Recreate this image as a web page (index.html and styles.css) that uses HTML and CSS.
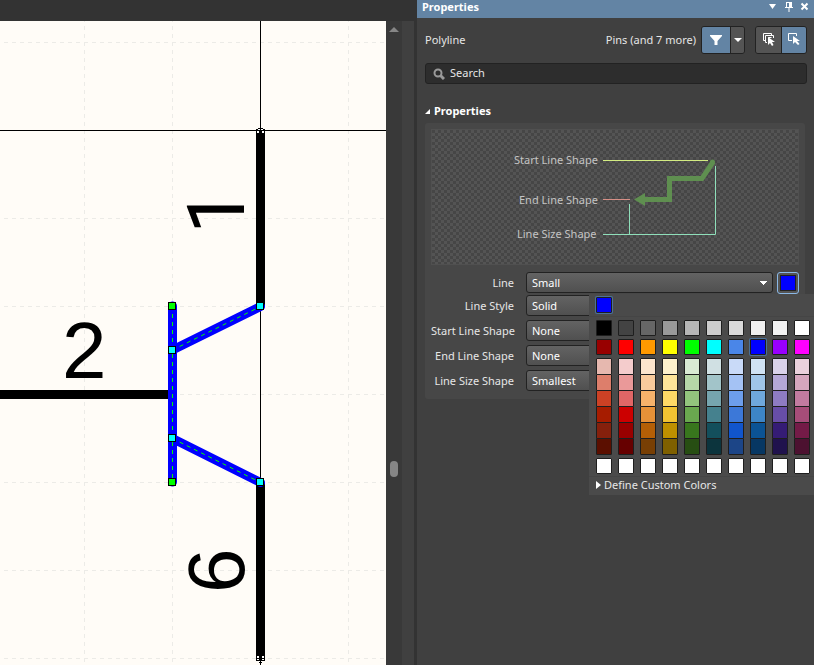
FILE: index.html
```html
<!DOCTYPE html>
<html lang="en">
  <head>
    <meta charset="UTF-8" />
    <meta name="viewport" content="width=device-width, initial-scale=1.0" />
    <title>Schematic Library | Properties</title>
    <link rel="stylesheet" href="styles.css">
  </head>
  <body>
    <!-- Schematic editor -->
    <main class="editor">
      <div class="editor-bar"></div>
      <div class="editor-body">
        <svg class="sheet" role="img" aria-label="Symbol drawing">
          <defs>
            <pattern id="grid" x="84" y="21" width="88" height="88" patternUnits="userSpaceOnUse">
              <path d="M0.5 0V88M0 0.5H88" stroke="#ecebe7" stroke-dasharray="4 4" fill="none" />
            </pattern>
          </defs>
          <rect width="100%" height="100%" fill="url(#grid)" />

          <!-- Cursor cross -->
          <path d="M260.5 0V1000M0 109.5H386" stroke="#000" fill="none" />

          <!-- Pins -->
          <path d="M260.5 108V285M260.5 461V640M0 373.5H168" stroke="#000" stroke-width="9" fill="none" />
          <g fill="#fff">
            <path d="M257 110h2v2h-2zM262 110h2v2h-2zM258 108h2v1h-2zM261 108h2v1h-2z" />
            <path d="M257 635h2v2h-2zM262 635h2v2h-2zM257 638h2v1h-2zM262 638h2v1h-2z" />
          </g>
          <path d="M258 107.5h5M259 641.5h3" stroke="#000" />
          <text class="pin-number" x="62" y="357">2</text>
          <text class="pin-number pin-one" transform="translate(244 213) rotate(-90)">1</text>
          <text class="pin-number" transform="translate(244 572) rotate(-90)">6</text>

          <!-- Selected polylines -->
          <path d="M172.5 285V461M172.5 329L260.5 285.5M172.5 417.5L260.5 461.5" stroke="#00f" stroke-width="9" stroke-linecap="round" fill="none" />
          <path d="M172.5 285V461M172.5 329L260.5 285.5M172.5 417.5L260.5 461.5" stroke="#0f0" stroke-dasharray="4 4" fill="none" />
          <g stroke="#000" fill="#0f0">
            <rect x="168.5" y="281.5" width="7" height="7" />
            <rect x="168.5" y="457.5" width="7" height="7" />
          </g>
          <g stroke="#000" fill="#0ff">
            <rect x="168.5" y="325.5" width="7" height="7" />
            <rect x="168.5" y="413.5" width="7" height="7" />
            <rect x="256.5" y="281.5" width="7" height="7" />
            <rect x="256.5" y="457.5" width="7" height="7" />
          </g>
        </svg>
        <div class="scrollbar">
          <span class="scroll-up"></span>
          <span class="scroll-thumb"></span>
        </div>
        <div class="gutter"></div>
      </div>
    </main>

    <!-- Properties panel -->
    <aside class="panel">
      <header class="panel-header">
        <h1>Properties</h1>
        <button type="button" aria-label="Panel menu">
          <svg width="9" height="9"><path d="M1 2h7L4.5 7z" fill="#fff" /></svg>
        </button>
        <button type="button" aria-label="Pin panel">
          <svg width="9" height="10"><path d="M2 0h6v5h1v1H5.5v4h-1V6H1V5h1zM3 1v4h2V1z" fill="#fff" fill-rule="evenodd" /></svg>
        </button>
        <button type="button" aria-label="Close panel">
          <svg width="9" height="9"><path d="M1.5 1.5l6 6M7.5 1.5l-6 6" stroke="#fff" stroke-width="2" /></svg>
        </button>
      </header>

      <div class="filter-row">
        <span class="object-type">Polyline</span>
        <span>Pins (and 7 more)</span>
        <div class="btn-group">
          <button type="button" class="btn-filter active" aria-label="Filter">
            <svg width="12" height="12"><path d="M0 1h12v1L7.5 7v4h-3V7L0 2z" fill="#fff" /></svg>
          </button>
          <button type="button" class="btn-drop" aria-label="Filter options">
            <svg width="8" height="5"><path d="M0 0h8L4 4z" fill="#fff" /></svg>
          </button>
        </div>
        <div class="btn-group">
          <button type="button" class="btn-select" aria-label="Select multiple">
            <svg width="14" height="16" fill="none" stroke="#fff">
              <path d="M3 8.5H1.5v-7h8V3M5 10.5H3.5v-7h8V6M6.5 11V5.5h3" />
              <path d="M6 5v8l2-2 2 3 1.5-1-1.5-3h3z" fill="#fff" stroke="none" />
            </svg>
          </button>
          <button type="button" class="btn-select active" aria-label="Select single">
            <svg width="14" height="16" fill="none" stroke="#fff">
              <path d="M5 8.500H1.500v-7h8V4" />
              <path d="M6 4v8l2-2 3 3 1.500-1-2.500-3h3z" fill="#fff" stroke="none" />
            </svg>
          </button>
        </div>
      </div>

      <label class="search">
        <svg width="12" height="12" fill="none" stroke="#999" stroke-width="2">
          <circle cx="5" cy="5" r="3.5" /><path d="M7.5 7.5L11 11" stroke-width="3" />
        </svg>
        <input type="text" placeholder="Search" aria-label="Search" />
      </label>

      <h2 class="section-title">
        <svg width="5" height="5"><path d="M5 0v5H0z" fill="#fff" /></svg>
        Properties
      </h2>

      <div class="section">
        <div class="preview">
          <svg width="368" height="136" fill="none">
            <g class="preview-labels">
              <text x="83" y="35">Start Line Shape</text>
              <text x="88" y="75">End Line Shape</text>
              <text x="86" y="109">Line Size Shape</text>
            </g>
            <path d="M172 31.5H277" stroke="#d3ec82" />
            <path d="M172 70.5H199" stroke="#d68f86" />
            <path d="M172 105.5H284.5V37M198.5 75V105" stroke="#8fdfba" />
            <path d="M282 33L271 49.5H238.5V70.5H213" stroke="#5f8f50" stroke-width="5" />
            <circle cx="281.5" cy="33" r="2.5" fill="#5f8f50" />
            <path d="M203 70.5L214 64v13z" fill="#5f8f50" />
          </svg>
        </div>

        <div class="fields">
          <div class="field field-line">
            <label for="line">Line</label>
            <select id="line"><option>Small</option></select>
            <button type="button" class="color-btn" aria-label="Line colour"><span></span></button>

            <!-- Colour picker -->
            <div class="picker">
              <div class="picker-current">
                <button type="button" class="swatch selected" style="background-color: #0000ff" aria-label="#0000ff"></button>
              </div>
              <div class="picker-colors" id="picker-colors"></div>
              <button type="button" class="picker-custom">
                <svg width="5" height="8"><path d="M0 0l5 4-5 4z" fill="#fff" /></svg>
                Define Custom Colors
              </button>
            </div>
          </div>
          <div class="field">
            <label for="line-style">Line Style</label>
            <select id="line-style"><option>Solid</option></select>
          </div>
          <div class="field">
            <label for="start-shape">Start Line Shape</label>
            <select id="start-shape"><option>None</option></select>
          </div>
          <div class="field">
            <label for="end-shape">End Line Shape</label>
            <select id="end-shape"><option>None</option></select>
          </div>
          <div class="field">
            <label for="size-shape">Line Size Shape</label>
            <select id="size-shape"><option>Smallest</option></select>
          </div>
        </div>
      </div>
    </aside>

    <script src="script.js"></script>
  </body>
</html>
```
FILE: styles.css
```css
* {
  box-sizing: border-box;
}

body {
  display: flex;
  height: 100vh;
  margin: 0;
  overflow: hidden;
  background-color: #404040;
  color: #e6e6e6;
  font-family: "Noto Sans", sans-serif;
  font-size: 11px;
  line-height: 16px;
}

button,
input,
select {
  margin: 0;
  padding: 0;
  border: 0;
  color: inherit;
  font: inherit;
}

/* Editor */
.editor {
  display: flex;
  flex: 1;
  flex-direction: column;
  min-width: 0;
  border-right: 3px solid #333;
}

.editor-bar {
  flex: none;
  height: 21px;
  background-color: #333;
}

.editor-body {
  display: flex;
  flex: 1;
  min-height: 0;
}

.sheet {
  flex: 1;
  min-width: 0;
  height: 100%;
  background-color: #fffcf7;
}

.pin-number {
  font-family: "Liberation Sans", Arial, sans-serif;
  font-size: 80px;
}

.pin-one {
  font-family: Roboto, sans-serif;
}

.scrollbar {
  display: flex;
  flex-direction: column;
  align-items: center;
  width: 16px;
  padding-top: 6px;
  background-color: #393939;
}

.scroll-up {
  border: 5px solid transparent;
  border-top: 0;
  border-bottom-color: #868686;
}

.scroll-thumb {
  width: 8px;
  height: 16px;
  margin-top: 429px;
  border-radius: 4px;
  background-color: #868686;
}

.gutter {
  width: 12px;
  background-color: #404040;
}

/* Panel */
.panel {
  flex: none;
  width: 397px;
}

.panel-header {
  display: flex;
  align-items: flex-start;
  gap: 7px;
  height: 18px;
  padding: 0 5px;
  background-color: #6384a4;
  color: #fff;
}

.panel-header h1 {
  flex: 1;
  margin: 0;
  font-size: 11px;
  line-height: 13px;
}

.panel-header button {
  display: flex;
  padding-top: 2px;
  background: none;
}

.filter-row {
  display: flex;
  align-items: center;
  height: 28px;
  margin: 8px 7px 9px 8px;
}

.object-type {
  flex: 1;
}

.btn-group {
  display: flex;
  height: 28px;
  margin-left: 5px;
  border: 1px solid #222;
  border-radius: 3px;
  overflow: hidden;
}

.btn-group + .btn-group {
  margin-left: 10px;
}

.btn-group button {
  display: flex;
  align-items: center;
  justify-content: center;
  background-color: #545454;
}

.btn-group button + button {
  border-left: 1px solid #222;
}

.btn-group .active {
  background-color: #6384a4;
}

.btn-filter {
  width: 28px;
}

.btn-drop {
  width: 14px;
}

.btn-select {
  width: 25px;
}

.search {
  display: flex;
  align-items: center;
  gap: 5px;
  height: 21px;
  margin: 0 7px 0 8px;
  padding: 0 7px 1px;
  border: 1px solid #222;
  border-radius: 3px;
  background-color: #2d2d2d;
}

.search svg {
  margin-top: 2px;
}

.search input {
  flex: 1;
  background: none;
  outline: 0;
}

.search input::placeholder {
  color: #e6e6e6;
}

.section-title {
  display: flex;
  align-items: center;
  gap: 4px;
  margin: 19px 8px 4px;
  color: #fff;
  font-size: 11px;
}

.section {
  margin: 0 9px 0 8px;
  padding: 6px 6px 8px;
  border-radius: 3px;
  background-color: #474747;
}

.preview {
  height: 136px;
  border: 1px solid #505050;
  background: repeating-conic-gradient(#545454 0 25%, #464646 0 50%) 0 0 / 6px 6px;
}

.preview svg {
  display: block;
  margin: -1px;
}

.preview-labels {
  fill: #c4c4c4;
  font-size: 11px;
}

/* Form fields */
.fields {
  display: flex;
  flex-direction: column;
  gap: 4px;
  margin-top: 7px;
}

.field {
  display: flex;
  align-items: center;
  height: 21px;
}

.field-line {
  position: relative;
  margin-bottom: -2px;
}

.field label {
  width: 83px;
  margin-right: 12px;
  text-align: right;
  white-space: nowrap;
}

.field select {
  flex: 1;
  min-width: 0;
  height: 21px;
  padding: 0 5px;
  border: 1px solid #222;
  border-radius: 3px;
  appearance: none;
  background: linear-gradient(#636363, #505050);
  color: #fff;
}

.field-line select {
  background:
    conic-gradient(from -45deg at 50% 100%, #fff 90deg, transparent 0) right 5px center / 8px 4px no-repeat,
    linear-gradient(#636363, #505050);
}

.color-btn {
  display: flex;
  width: 22px;
  height: 22px;
  margin-left: 4px;
  padding: 2px;
  border: 1px solid #8ab8e6;
  border-radius: 3px;
  background-color: #545454;
}

.color-btn span {
  flex: 1;
  border: 1px solid #222;
  background-color: #00f;
}

/* Colour picker */
.picker {
  position: absolute;
  top: 22px;
  right: -15px;
  z-index: 1;
  width: 225px;
  background-color: #4a4a4a;
}

.picker-current {
  height: 23px;
  padding: 3px 7px;
  border-bottom: 1px solid #454545;
}

.picker-colors {
  display: flex;
  flex-direction: column;
  gap: 3px;
  padding: 3px 7px 2px;
  border-bottom: 1px solid #454545;
}

.swatch-row {
  display: flex;
  gap: 6px;
}

.swatch-row.joined {
  margin-top: -4px;
}

.swatch {
  display: block;
  flex: none;
  width: 16px;
  height: 16px;
  border: 1px solid #1e1e1e;
  border-radius: 1px;
}

.joined .swatch,
.ramp .swatch {
  height: 17px;
}

.swatch.selected {
  box-shadow: 0 0 0 1px #4a7199;
}

.picker-custom {
  display: flex;
  align-items: center;
  gap: 3px;
  width: 100%;
  height: 18px;
  padding: 0 7px 2px;
  background: none;
}
```
FILE: script.js
```javascript
const paletteRows = [
  { type: "", colors: "000000 434343 666666 999999 b7b7b7 cccccc d9d9d9 efefef f3f3f3 ffffff" },
  { type: "", colors: "980000 ff0000 ff9900 ffff00 00ff00 00ffff 4a86e8 0000ff 9900ff ff00ff" },
  { type: "ramp", colors: "e6b8af f4cccc fce5cd fff2cc d9ead3 d0e0e3 c9daf8 cfe2f3 d9d2e9 ead1dc" },
  { type: "joined", colors: "dd7e6b ea9999 f9cb9c ffe599 b6d7a8 a2c4c9 a4c2f4 9fc5e8 b4a7d6 d5a6bd" },
  { type: "joined", colors: "cc4125 e06666 f6b26b ffd966 93c47d 76a5af 6d9eeb 6fa8dc 8e7cc3 c27ba0" },
  { type: "joined", colors: "a61c00 cc0000 e69138 f1c232 6aa84f 45818e 3c78d8 3d85c6 674ea7 a64d79" },
  { type: "joined", colors: "85200c 990000 b45f06 bf9000 38761d 134f5c 1155cc 0b5394 351c75 741b47" },
  { type: "joined", colors: "5b0f00 660000 783f04 7f6000 274e13 0c343d 1c4587 073763 20124d 4c1130" },
  { type: "", colors: "ffffff ffffff ffffff ffffff ffffff ffffff ffffff ffffff ffffff ffffff" },
];

const picker = document.getElementById("picker-colors");

paletteRows.forEach((row) => {
  const line = document.createElement("div");
  line.className = `swatch-row ${row.type}`;

  row.colors.split(" ").forEach((color) => {
    const swatch = document.createElement("button");
    swatch.type = "button";
    swatch.className = "swatch";
    swatch.style.backgroundColor = `#${color}`;
    swatch.setAttribute("aria-label", `#${color}`);
    if (color === "0000ff") {
      swatch.classList.add("selected");
    }
    line.appendChild(swatch);
  });

  picker.appendChild(line);
});
```
